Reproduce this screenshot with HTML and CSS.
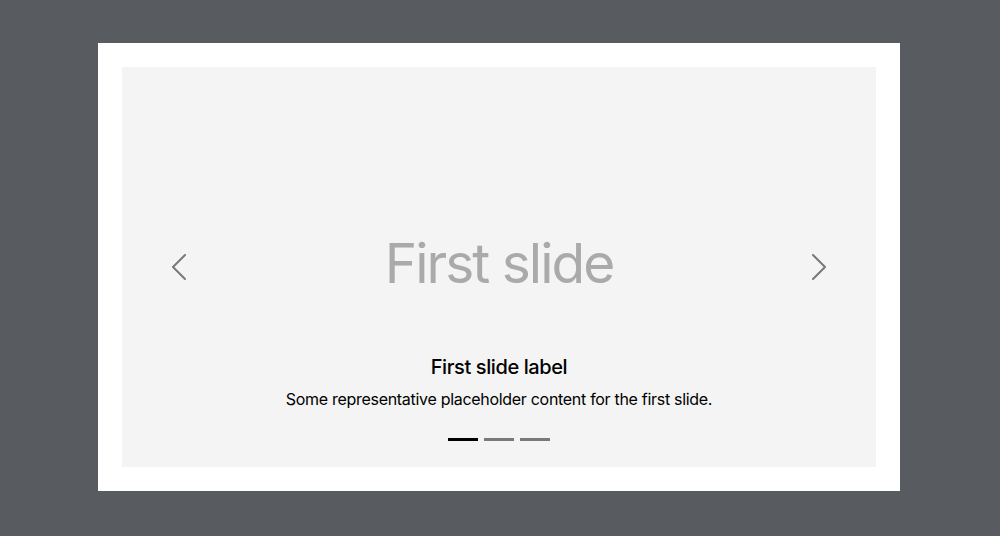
FILE: index.html
```html
<!DOCTYPE html>
<html lang="en">
<head>
<meta charset="utf-8">
<title>Carousel</title>
<link rel="stylesheet" href="styles.css">
</head>
<body>
  <div class="card">
    <div class="carousel">
      <div class="slide">
        <span class="slide-title">First slide</span>
      </div>
      <div class="caption">
        <h5>First slide label</h5>
        <p>Some representative placeholder content for the first slide.</p>
      </div>
      <div class="indicators">
        <button class="dot active" aria-label="Slide 1"></button>
        <button class="dot" aria-label="Slide 2"></button>
        <button class="dot" aria-label="Slide 3"></button>
      </div>
      <button class="control prev" aria-label="Previous">
        <svg viewBox="0 0 16 16" width="32" height="32"><path fill="#000" d="M11.354 1.646a.5.5 0 0 1 0 .708L5.707 8l5.647 5.646a.5.5 0 0 1-.708.708l-6-6a.5.5 0 0 1 0-.708l6-6a.5.5 0 0 1 .708 0z"/></svg>
      </button>
      <button class="control next" aria-label="Next">
        <svg viewBox="0 0 16 16" width="32" height="32"><path fill="#000" d="M4.646 1.646a.5.5 0 0 1 .708 0l6 6a.5.5 0 0 1 0 .708l-6 6a.5.5 0 0 1-.708-.708L10.293 8 4.646 2.354a.5.5 0 0 1 0-.708z"/></svg>
      </button>
    </div>
  </div>
</body>
</html>
```
FILE: styles.css
```css
html, body {
  margin: 0;
  height: 100%;
}
body {
  background: #585b5f;
  padding: 43px 100px 0 98px;
  box-sizing: border-box;
  font-family: Inter, "Liberation Sans", sans-serif;
  color: #000;
}
.card {
  background: #fff;
  width: 802px;
  padding: 24px;
  box-sizing: border-box;
}
.carousel {
  position: relative;
  height: 400px;
  overflow: hidden;
}
.slide {
  height: 100%;
  background: #f4f4f4;
  display: flex;
  align-items: center;
  justify-content: center;
}
.slide-title {
  font-size: 55px;
  color: #aaa;
  line-height: 1;
  margin-top: -8px;
  letter-spacing: -2px;
}
.caption {
  position: absolute;
  left: 15%;
  right: 15%;
  bottom: 20px;
  padding: 20px 0;
  text-align: center;
}
.caption h5 {
  margin: 0 0 8px;
  font-size: 20px;
  font-weight: 500;
  line-height: 1.2;
  letter-spacing: -0.4px;
}
.caption p {
  margin: 0 0 16px;
  font-size: 16px;
  line-height: 24px;
  letter-spacing: -0.3px;
}
.indicators {
  position: absolute;
  left: 0;
  right: 0;
  bottom: 0;
  margin-bottom: 16px;
  display: flex;
  justify-content: center;
}
.dot {
  width: 30px;
  height: 3px;
  margin: 0 3px;
  padding: 0;
  border: 0;
  border-top: 10px solid transparent;
  border-bottom: 10px solid transparent;
  background: #000;
  background-clip: padding-box;
  opacity: 0.5;
  box-sizing: content-box;
}
.dot.active {
  opacity: 1;
}
.control {
  position: absolute;
  top: 0;
  bottom: 0;
  width: 15%;
  padding: 0;
  border: 0;
  background: none;
  display: flex;
  align-items: center;
  justify-content: center;
  opacity: 0.5;
}
.prev { left: 0; }
.next { right: 0; }
```
